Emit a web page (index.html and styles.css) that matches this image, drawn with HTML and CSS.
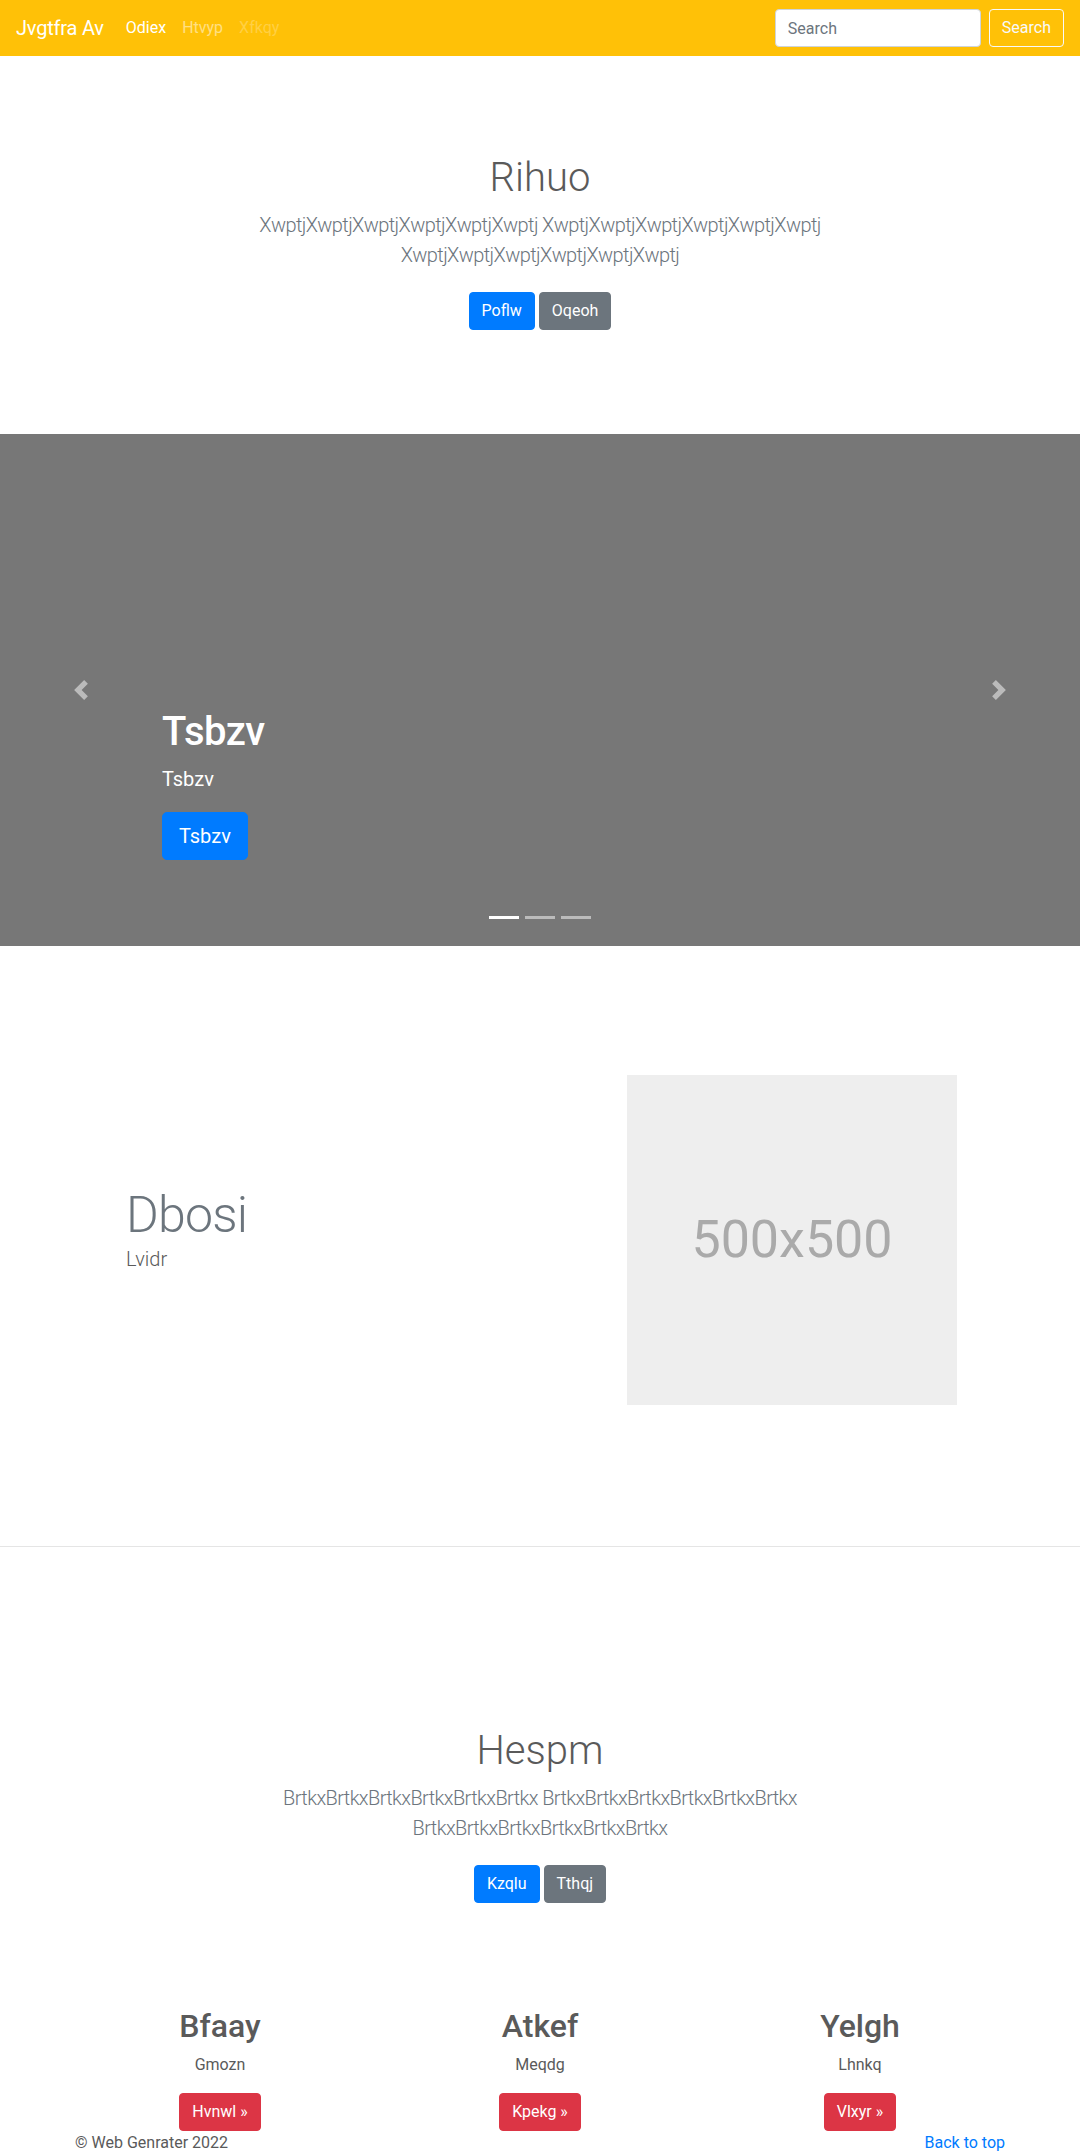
FILE: index.html
```html
<!DOCTYPE html>
<html lang="en">
<head>
<meta charset="utf-8">
<title>Jvgtfra Av</title>
<link rel="stylesheet" href="styles.css">
</head>
<body>
<nav class="navbar">
  <a class="brand" href="#">Jvgtfra Av</a>
  <ul class="nav">
    <li><a class="nav-link active" href="#">Odiex</a></li>
    <li><a class="nav-link" href="#">Htvyp</a></li>
    <li><a class="nav-link disabled" href="#">Xfkqy</a></li>
  </ul>
  <form class="search">
    <input class="search-input" type="text" placeholder="Search">
    <button class="search-btn" type="button">Search</button>
  </form>
</nav>

<section class="hero">
  <h1 class="hero-title">Rihuo</h1>
  <p class="hero-lead">XwptjXwptjXwptjXwptjXwptjXwptj XwptjXwptjXwptjXwptjXwptjXwptj XwptjXwptjXwptjXwptjXwptjXwptj</p>
  <div class="hero-actions">
    <a class="btn btn-primary" href="#">Poflw</a>
    <a class="btn btn-secondary" href="#">Oqeoh</a>
  </div>
</section>

<div class="carousel">
  <div class="carousel-caption">
    <h1 class="caption-title">Tsbzv</h1>
    <p class="caption-text">Tsbzv</p>
    <p class="caption-action"><a class="btn btn-lg btn-primary" href="#">Tsbzv</a></p>
  </div>
  <ol class="indicators">
    <li class="active"></li>
    <li></li>
    <li></li>
  </ol>
  <a class="control control-prev" href="#">
    <svg class="control-icon" viewBox="0 0 8 8" width="20" height="20"><path fill="#fff" d="M5.25 0l-4 4 4 4 1.5-1.5L4.25 4l2.5-2.5L5.25 0z"/></svg>
  </a>
  <a class="control control-next" href="#">
    <svg class="control-icon" viewBox="0 0 8 8" width="20" height="20"><path fill="#fff" d="M2.75 0l-1.5 1.5L3.75 4l-2.5 2.5L2.75 8l4-4-4-4z"/></svg>
  </a>
</div>

<section class="featurette">
  <div class="featurette-text">
    <h2 class="featurette-heading">Dbosi</h2>
    <p class="featurette-lead">Lvidr</p>
  </div>
  <div class="placeholder"><span>500x500</span></div>
</section>

<hr class="divider">

<section class="hero">
  <h1 class="hero-title">Hespm</h1>
  <p class="hero-lead">BrtkxBrtkxBrtkxBrtkxBrtkxBrtkx BrtkxBrtkxBrtkxBrtkxBrtkxBrtkx BrtkxBrtkxBrtkxBrtkxBrtkxBrtkx</p>
  <div class="hero-actions">
    <a class="btn btn-primary" href="#">Kzqlu</a>
    <a class="btn btn-secondary" href="#">Tthqj</a>
  </div>
</section>

<section class="marketing">
  <div class="col">
    <h2 class="col-title">Bfaay</h2>
    <p class="col-text">Gmozn</p>
    <p class="col-action"><a class="btn btn-danger" href="#">Hvnwl &raquo;</a></p>
  </div>
  <div class="col">
    <h2 class="col-title">Atkef</h2>
    <p class="col-text">Meqdg</p>
    <p class="col-action"><a class="btn btn-danger" href="#">Kpekg &raquo;</a></p>
  </div>
  <div class="col">
    <h2 class="col-title">Yelgh</h2>
    <p class="col-text">Lhnkq</p>
    <p class="col-action"><a class="btn btn-danger" href="#">Vlxyr &raquo;</a></p>
  </div>
</section>

<footer class="footer">
  <p class="footer-copy">&copy; Web Genrater 2022</p>
  <p class="footer-top"><a href="#">Back to top</a></p>
</footer>
</body>
</html>
```

FILE: styles.css
```css
* { box-sizing: border-box; }

html, body { margin: 0; padding: 0; }

body {
  font-family: Roboto, "Liberation Sans", Arial, sans-serif;
  font-size: 16px;
  line-height: 1.5;
  color: #5a5a5a;
  background: #fff;
}

a { text-decoration: none; }

/* Navbar */
.navbar {
  display: flex;
  align-items: center;
  height: 56px;
  padding: 0 16px;
  background: #ffc107;
}
.brand {
  font-size: 20px;
  line-height: 30px;
  padding: 5px 0;
  margin-right: 14px;
  letter-spacing: -0.2px;
  color: #fff;
}
.nav {
  display: flex;
  list-style: none;
  margin: 0;
  padding: 0;
  flex: 1;
}
.nav-link {
  display: block;
  padding: 8px;
  color: rgba(255, 255, 255, .5);
}
.nav-link.active { color: #fff; }
.nav-link.disabled { color: rgba(255, 255, 255, .25); }

.search { display: flex; align-items: center; margin: 0; }
.search-input {
  width: 206px;
  height: 38px;
  padding: 6px 12px;
  margin-right: 8px;
  font-family: inherit;
  font-size: 16px;
  line-height: 24px;
  color: #495057;
  background: #fff;
  border: 1px solid #ced4da;
  border-radius: 4px;
}
.search-input::placeholder { color: #6c757d; }
.search-btn {
  height: 38px;
  padding: 6px 12px;
  font-family: inherit;
  font-size: 16px;
  line-height: 24px;
  color: #f8f9fa;
  background: transparent;
  border: 1px solid #f8f9fa;
  border-radius: 4px;
}

/* Buttons */
.btn {
  display: inline-block;
  padding: 6px 12px;
  font-size: 16px;
  line-height: 24px;
  color: #fff;
  border: 1px solid transparent;
  border-radius: 4px;
}
.btn-lg {
  padding: 8px 16px;
  font-size: 20px;
  line-height: 30px;
  border-radius: 5px;
}
.btn-primary { background: #007bff; border-color: #007bff; }
.btn-secondary { background: #6c757d; border-color: #6c757d; }
.btn-danger { background: #dc3545; border-color: #dc3545; }

/* Hero */
.hero {
  text-align: center;
  padding: 98px 0 104px;
}
.hero-title {
  margin: 0 0 8px;
  font-size: 40px;
  line-height: 48px;
  font-weight: 300;
  color: #5a5a5a;
}
.hero-lead {
  max-width: 680px;
  margin: 0 auto;
  font-size: 20px;
  line-height: 30px;
  font-weight: 300;
  letter-spacing: -0.6px;
  color: #6c757d;
}
.hero-actions {
  display: flex;
  justify-content: center;
  gap: 4px;
  margin-top: 22px;
}

/* Carousel */
.carousel {
  position: relative;
  height: 512px;
  background: #777;
  overflow: hidden;
}
.carousel-caption {
  position: absolute;
  left: 15%;
  right: 15%;
  bottom: 70px;
  color: #fff;
}
.caption-title {
  margin: 0 0 8px;
  font-size: 40px;
  line-height: 48px;
  font-weight: 500;
  letter-spacing: -0.5px;
}
.caption-text {
  margin: 0 0 18px;
  font-size: 20px;
  line-height: 30px;
}
.caption-action { margin: 0 0 16px; }

.indicators {
  position: absolute;
  left: 0;
  right: 0;
  bottom: 27px;
  display: flex;
  justify-content: center;
  gap: 6px;
  list-style: none;
  margin: 0;
  padding: 0;
}
.indicators li {
  width: 30px;
  height: 3px;
  background: #fff;
  opacity: .5;
}
.indicators li.active { opacity: 1; }

.control {
  position: absolute;
  top: 0;
  bottom: 0;
  width: 15%;
  display: flex;
  align-items: center;
  justify-content: center;
  opacity: .5;
}
.control-prev { left: 0; }
.control-next { right: 0; }
.control-icon { display: block; }

/* Featurette */
.featurette {
  display: flex;
  padding: 129px 0 141px 126px;
}
.featurette-text {
  width: 501px;
  padding-top: 115px;
}
.featurette-heading {
  margin: 0 0 4px;
  font-size: 50px;
  line-height: 50px;
  font-weight: 300;
  letter-spacing: -0.8px;
  color: #6c757d;
}
.featurette-lead {
  margin: 0;
  font-size: 20px;
  line-height: 30px;
  font-weight: 300;
  color: #5a5a5a;
}
.placeholder {
  width: 330px;
  height: 330px;
  display: flex;
  align-items: center;
  justify-content: center;
  background: #eee;
  color: #aaa;
  font-size: 52px;
  line-height: 1;
}

.divider {
  margin: 0 0 82px;
  border: 0;
  border-top: 1px solid rgba(0, 0, 0, .1);
}

/* Marketing columns */
.marketing {
  width: 960px;
  margin: 0 auto;
  display: grid;
  grid-template-columns: repeat(3, 1fr);
  text-align: center;
}
.col-title {
  margin: 0 0 8px;
  font-size: 32px;
  line-height: 38.4px;
  font-weight: 500;
  color: #5a5a5a;
}
.col-text { margin: 0 0 16px; }
.col-action { margin: 0; }

/* Footer */
.footer {
  width: 930px;
  margin: 0 auto;
  display: flex;
  justify-content: space-between;
}
.footer p { margin: 0; }
.footer-top a { color: #007bff; }
```
